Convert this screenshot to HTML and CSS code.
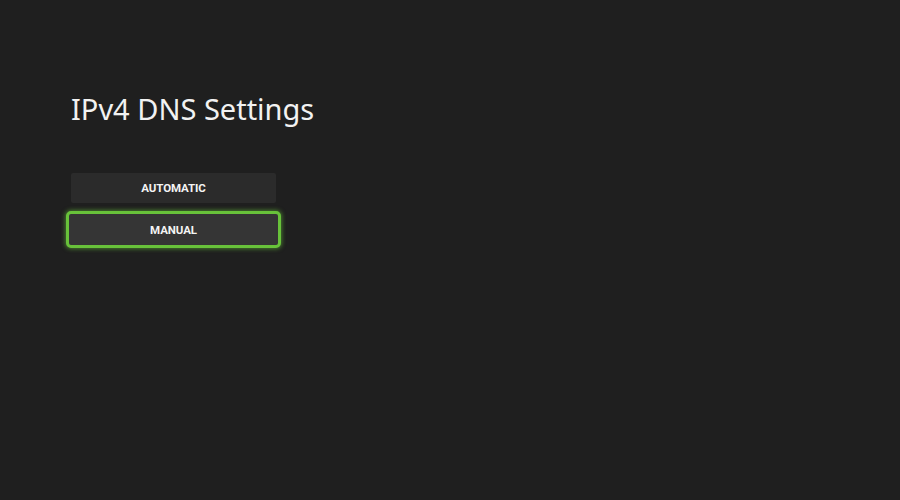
FILE: index.html
```html
<!DOCTYPE html>
<html>
<head>
<meta charset="utf-8">
<link rel="stylesheet" href="styles.css">
</head>
<body>
<main class="page">
  <h1 class="title">IPv4 DNS Settings</h1>
  <div class="options">
    <button class="option">AUTOMATIC</button>
    <button class="option focused">MANUAL</button>
  </div>
</main>
</body>
</html>
```

FILE: styles.css
```css
html, body {
  margin: 0;
  padding: 0;
  background: #1f1f1f;
  width: 900px;
  height: 500px;
  overflow: hidden;
}
.page {
  padding: 90px 0 0 71px;
  font-family: "Noto Sans", "Open Sans", sans-serif;
  color: #f2f2f2;
}
.title {
  margin: 0;
  font-weight: 400;
  font-size: 29px;
  line-height: 38px;
  letter-spacing: 0;
}
.options {
  margin-top: 45px;
  display: flex;
  flex-direction: column;
  gap: 8px;
  width: 205px;
}
.option {
  height: 30px;
  background: #2b2b2b;
  border: none;
  border-radius: 2px;
  color: #f4f4f4;
  font-family: Roboto, "Noto Sans", sans-serif;
  font-weight: 700;
  font-size: 11.5px;
  letter-spacing: -0.1px;
  padding: 0;
}
.option.focused {
  margin: 0 -5px;
  height: 37px;
  background: #353535;
  border: 3px solid #68c23a;
  border-radius: 5px;
  box-shadow: 0 0 4px 1px rgba(104, 194, 58, 0.55);
}
```
